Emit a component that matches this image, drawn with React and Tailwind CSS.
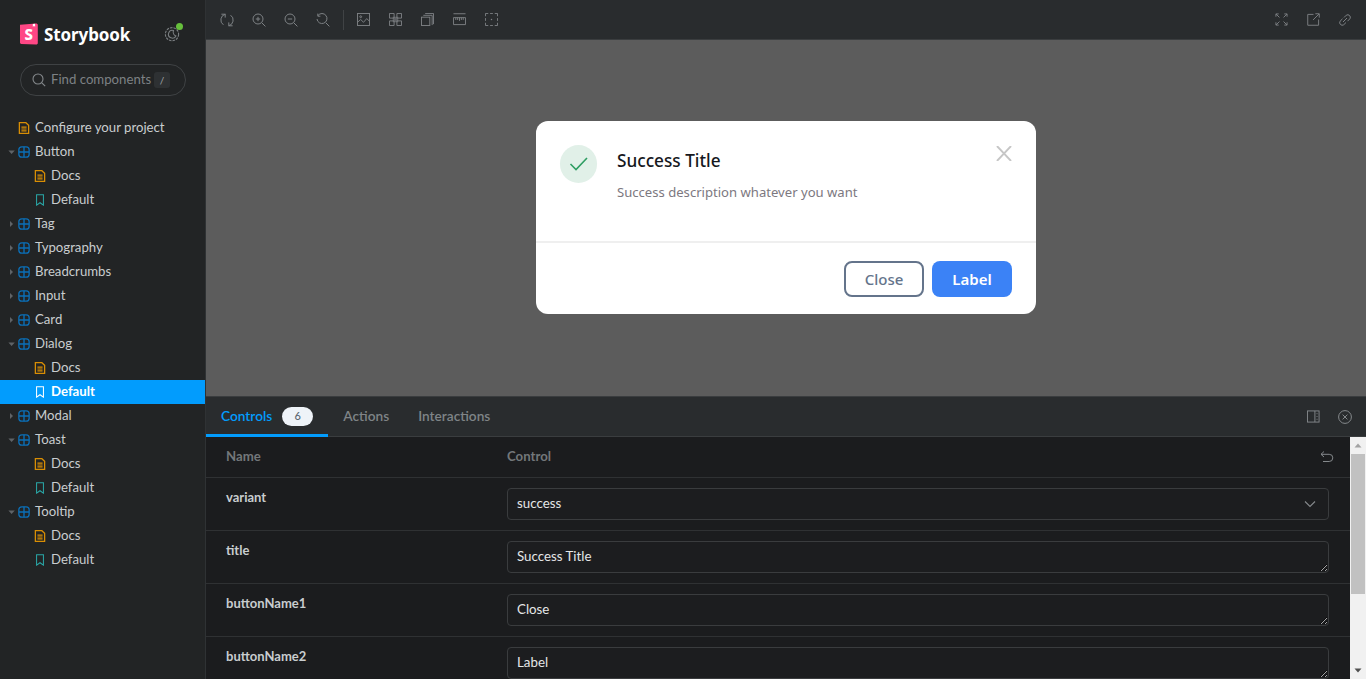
import React from "react";

const ui = { fontFamily: '"Noto Sans", "Open Sans", sans-serif' };
const chrome = { fontFamily: 'Lato, "Noto Sans", sans-serif' };

function Ic({ children, size = 14, className = "", sw = 1 }) {
  return (
    <svg width={size} height={size} viewBox="0 0 14 14" fill="none" stroke="currentColor" strokeWidth={sw} className={`shrink-0 ${className}`}>
      {children}
    </svg>
  );
}

const Doc = () => (
  <Ic size={12} className="text-[#d98e04]">
    <path d="M1.6.8h7.6l3.2 3v9.4H1.6z" strokeWidth="1.5" />
    <path d="M4 6h6M4 8.2h6M4 10.4h6" strokeWidth="1.3" />
  </Ic>
);
const Grid = () => (
  <Ic size={12} className="text-[#0b6fb8]">
    <rect x="1" y="1" width="12" height="12" rx="3.5" strokeWidth="1.5" />
    <path d="M1 7h12M7 1v12" strokeWidth="1.6" />
  </Ic>
);
const Mark = ({ c = "text-[#2aa7a7]" }) => (
  <Ic size={12} className={c}>
    <path d="M3 1h8v12L7 10.2 3 13z" strokeWidth="1.2" />
  </Ic>
);
const Caret = ({ open }) => (
  <svg width="8" height="8" viewBox="0 0 8 8" className="text-[#5f6367]" fill="currentColor">
    {open ? <path d="M.4 2.4h6.4L3.6 6z" /> : <path d="M2 1l3 3-3 3z" />}
  </svg>
);

function Row({ label, kind, open, active }) {
  const indent = kind === "doc" || kind === "story" ? "pl-[35px]" : kind === "top" ? "pl-[19px]" : "pl-[8px]";
  return (
    <div className={`h-6 flex items-center shrink-0 ${indent} text-[13.2px] ${active ? "bg-[#029cfd] text-white font-bold" : "text-[#c9cdcf]"}`}>
      {kind === "comp" && (
        <span className="w-[11px] flex justify-start">
          <Caret open={open} />
        </span>
      )}
      <span className="w-[16px] flex items-center -ml-px pr-0">
        {kind === "comp" && <Grid />}
        {(kind === "doc" || kind === "top") && <Doc />}
        {kind === "story" && <Mark c={active ? "text-white" : "text-[#2aa7a7]"} />}
      </span>
      <span className="ml-px">{label}</span>
    </div>
  );
}

const tree = [
  ["Configure your project", "top"],
  ["Button", "comp", true],
  ["Docs", "doc"],
  ["Default", "story"],
  ["Tag", "comp"],
  ["Typography", "comp"],
  ["Breadcrumbs", "comp"],
  ["Input", "comp"],
  ["Card", "comp"],
  ["Dialog", "comp", true],
  ["Docs", "doc"],
  ["Default", "story", false, true],
  ["Modal", "comp"],
  ["Toast", "comp", true],
  ["Docs", "doc"],
  ["Default", "story"],
  ["Tooltip", "comp", true],
  ["Docs", "doc"],
  ["Default", "story"],
];

function Sidebar() {
  return (
    <aside className="w-[206px] shrink-0 h-full bg-[#222425] border-r border-[#2f3234] flex flex-col">
      <div className="flex items-center h-[64px] pt-[4px] pl-5 pr-[25px] justify-between shrink-0">
        <div className="flex items-center gap-[6px]">
          <svg width="18" height="22" viewBox="0 0 18 22" className="shrink-0">
            <path d="M0 1.8 16 .6c1 0 1.8.5 1.8 1.5v18c0 1-.8 1.6-1.8 1.5L1.4 21C.5 21 0 20.4 0 19.6z" fill="#ff4785" />
            <path d="M12.8.9v2.9l1.2-.9 1.1.9V.7z" fill="#fff" />
            <text x="8.8" y="16.6" textAnchor="middle" fill="#fff" fontSize="15" fontWeight="800" fontFamily="Noto Sans">S</text>
          </svg>
          <span className="text-white text-[17px] font-bold tracking-[-0.1px] mt-[1px]">Storybook</span>
        </div>
        <div className="relative">
          <svg width="16" height="16" viewBox="0 0 16 16" fill="none" stroke="#7a7e81" strokeWidth="1.1">
            <circle cx="8" cy="8.2" r="6.6" strokeDasharray="2.6 1" />
            <path d="M9.5 4.5a3.9 3.9 0 1 0 2.4 5.4 4.2 4.2 0 0 1-2.4-5.4z" />
          </svg>
          <span className="absolute -top-[3px] -right-[3px] w-[7px] h-[7px] rounded-full bg-[#66bf3c]" />
        </div>
      </div>
      <div className="ml-5 mr-[19px] h-8 rounded-full border border-[#3f4244] flex items-center pl-[11px] pr-[15px] shrink-0" style={chrome}>
        <svg width="14" height="14" viewBox="0 0 14 14" fill="none" stroke="#85898c" strokeWidth="1.1" className="shrink-0">
          <circle cx="6" cy="6" r="5" />
          <path d="m9.8 9.8 3.4 3.4" />
        </svg>
        <span className="ml-[5px] text-[#7d8184] text-[13.2px] leading-[18px] mb-[2px] whitespace-nowrap">Find components</span>
        <span className="ml-[3px] w-4 h-4 shrink-0 rounded-[3px] bg-[#2e3133] text-[#a0a4a7] text-[10px] flex items-center justify-center">/</span>
      </div>
      <nav className="mt-[20px] flex flex-col" style={chrome}>
        {tree.map(([l, k, o, a], i) => (
          <Row key={i} label={l} kind={k} open={o} active={a} />
        ))}
      </nav>
    </aside>
  );
}

function Tool({ children }) {
  return <button className="w-8 h-8 flex items-center justify-center text-[#7e8285]">{children}</button>;
}

function Toolbar() {
  return (
    <header className="h-10 shrink-0 bg-[#292c2e] border-b border-[#3a3d3f] flex items-center justify-between pl-[5px] pr-[5px]">
      <div className="flex items-center">
        <Tool><Ic><path d="M5.4 1.2A5.9 5.9 0 0 0 3.4 11.8M8.6 12.8A5.9 5.9 0 0 0 10.6 2.2M1.4 1.2h3.8v3.4M12.6 12.8H8.8V9.4" sw="1.3" /></Ic></Tool>
        <Tool><Ic><circle cx="6" cy="6" r="5" /><path d="m9.8 9.8 3.6 3.6M3.8 6h4.4M6 3.8v4.4" /></Ic></Tool>
        <Tool><Ic><circle cx="6" cy="6" r="5" /><path d="m9.8 9.8 3.6 3.6M3.8 6h4.4" /></Ic></Tool>
        <Tool><Ic><path d="M2 2.5A5 5 0 1 1 1 6M1.8.6v2.6h2.6M9.8 9.8l3.6 3.6" /></Ic></Tool>
        <span className="w-px h-5 bg-[#404345] mx-[4px]" />
        <span className="-ml-px flex items-center">
          <Tool><Ic size={13}><rect x=".5" y=".5" width="13" height="13" /><path d="m.5 10 3.5-3 3 3 3.5-4 3 3" /><circle cx="4" cy="4" r="1" /></Ic></Tool>
          <Tool><Ic size={13}><path d="M.5.5h5v5h-5zM8.5.5h5v5h-5zM.5 8.5h5v5h-5zM8.5 8.5h5v5h-5z" /><rect x="4" y="4" width="6" height="6" fill="currentColor" stroke="none" opacity=".6" /></Ic></Tool>
          <Tool><Ic size={13}><rect x=".5" y="4.5" width="9" height="9" /><path d="M2.5 2.5h9.5V13M4.5.5h9V12" /></Ic></Tool>
          <Tool><Ic size={13}><path d="M.5.8h13M.5 5h13v7.5H.5z" /><path d="M3 5v2.5M5 5v2.5M7 5v3.5M9 5v2.5M11 5v2.5" /></Ic></Tool>
          <Tool><Ic size={13}><path d="M.5 3.5v-3h3M10.5.5h3v3M13.5 10.5v3h-3M3.5 13.5h-3v-3M.5 5.5v3M13.5 5.5v3M5.5.5h3M5.5 13.5h3" /><circle cx="7" cy="7" r=".8" fill="currentColor" stroke="none" /></Ic></Tool>
        </span>
      </div>
      <div className="flex items-center">
        <Tool><Ic size={13}><path d="M1 1l3.8 3.8M13 1 9.2 4.8M1 13l3.8-3.8M13 13 9.2 9.2M1 4V1h3M10 1h3v3M1 10v3h3M10 13h3v-3" sw="1.2" /></Ic></Tool>
        <Tool><Ic size={13}><path d="M7 1.5H.8v11.7h11.7V7M13 1 6.5 7.5M9 .8h4.2V5" /></Ic></Tool>
        <Tool><Ic size={14}><path d="M6 4.5 8.3 2.2a2.6 2.6 0 0 1 3.6 3.6L9.5 8.2M8 9.5l-2.3 2.3a2.6 2.6 0 0 1-3.6-3.6l2.4-2.4M5 9l4-4" sw="1.2" /></Ic></Tool>
      </div>
    </header>
  );
}

function Dialog() {
  return (
    <div className="w-[500px] h-[193px] bg-white rounded-xl flex flex-col">
      <div className="h-[122px] shrink-0 flex pl-6 pr-6 pt-6 border-b-2 border-[#efefef] relative">
        <div className="w-[37px] h-[38px] rounded-full bg-[#e1f0e8] flex items-center justify-center shrink-0">
          <svg width="20" height="16" viewBox="0 0 20 16" fill="none" stroke="#2f9e63" strokeWidth="1.6"><path d="m1.5 8 5.5 5.5L18 2" /></svg>
        </div>
        <div className="ml-[20px]">
          <h2 className="text-[17.2px] leading-[28px] font-medium text-[#16181d] mt-[2px]">Success Title</h2>
          <p className="text-[13.1px] leading-[20px] text-[#7c7880] mt-[7px]">Success description whatever you want</p>
        </div>
        <svg className="absolute top-[25px] right-[23px]" width="18" height="15" viewBox="0 0 18 16" fill="none" stroke="#c6c6c6" strokeWidth="2"><path d="m1.5 0 15 16M16.5 0l-15 16" /></svg>
      </div>
      <div className="flex-1 flex items-start pt-[18px] justify-end gap-2 pr-6">
        <button className="w-20 h-9 rounded-lg border-2 border-[#64748b] text-[#64748b] text-[15px] font-medium">Close</button>
        <button className="w-20 h-9 rounded-lg bg-[#3b82f6] text-white text-[15px] font-semibold">Label</button>
      </div>
    </div>
  );
}

function ControlRow({ name, children }) {
  return (
    <div className="h-[53px] shrink-0 border-b border-[#2f3133] flex pl-5 pr-[21px]">
      <div className="w-[281px] pt-[10px] text-[13px] font-bold text-[#c9cdcf]">{name}</div>
      <div className="flex-1 pt-[10px]">{children}</div>
    </div>
  );
}

function Area({ value }) {
  return (
    <textarea
      readOnly
      rows={1}
      value={value}
      className="block w-full h-8 bg-[#1c1d1f] border border-[#3a3c3e] rounded-[4px] px-[9px] py-[5px] text-[13.3px] leading-[18px] text-[#e4e6e7] resize-y outline-none overflow-hidden"
      style={chrome}
    />
  );
}

function Scrollbar() {
  return (
    <div className="w-[16px] shrink-0 bg-[#f1f1f1] flex flex-col items-center">
      <svg width="16" height="17" viewBox="0 0 16 17" className="shrink-0"><path d="M4.5 10.5 8 6.5l3.5 4z" fill="#a3a3a3" /></svg>
      <div className="w-[14px] h-[140px] bg-[#c1c1c1]" />
      <div className="flex-1" />
      <svg width="16" height="17" viewBox="0 0 16 17" className="shrink-0"><path d="M4.5 6.5 8 10.5l3.5-4z" fill="#505050" /></svg>
    </div>
  );
}

function Panel() {
  return (
    <section className="h-[283px] shrink-0 flex flex-col border-t border-[#3a3d3f]" style={chrome}>
      <div className="h-10 shrink-0 bg-[#292c2e] border-b border-[#3a3d3f] flex items-center justify-between pr-[14px]">
        <div className="flex h-full text-[13.7px] font-semibold">
          <div className="relative flex items-center pl-[15px] pr-[15px] text-[#029cfd]">
            Controls
            <span className="ml-[10px] w-[31px] h-[19px] rounded-full bg-[#eef3f8] text-[#5c6870] text-[11px] font-medium flex items-center justify-center">6</span>
            <span className="absolute left-0 right-0 bottom-[-1px] h-[3px] bg-[#029cfd]" />
          </div>
          <div className="flex items-center pl-[15px] pr-[14px] text-[#7f8487]">Actions</div>
          <div className="flex items-center px-[15px] text-[#7f8487]">Interactions</div>
        </div>
        <div className="flex items-center gap-[18px] text-[#85898c]">
          <Ic size={13}><rect x=".5" y="1" width="12.5" height="12" /><path d="M8.5 1v12" /><path d="M10.8 3.5v1M10.8 6.5v1M10.8 9.5v1" sw="1.2" /></Ic>
          <Ic size={14}><circle cx="7" cy="7" r="6.4" /><path d="m4.6 4.6 4.8 4.8M9.4 4.6l-4.8 4.8" /></Ic>
        </div>
      </div>
      <div className="flex-1 min-h-0 flex">
        <div className="flex-1 min-w-0 overflow-hidden bg-[#1b1c1e]">
          <div className="h-[41px] border-b border-[#2f3133] flex items-center pl-5 pr-[16px] text-[13.2px] font-bold text-[#73777a]">
            <div className="w-[281px]">Name</div>
            <div className="flex-1">Control</div>
            <Ic size={14} className="text-[#85898c]"><path d="M4 1.5 1 4.3 4 7M1 4.3h8.2a3.6 3.6 0 0 1 0 7.2H3" /></Ic>
          </div>
          <ControlRow name="variant">
            <div className="h-8 bg-[#1c1d1f] border border-[#3a3c3e] rounded-[4px] flex items-center justify-between pl-[9px] pr-[12px] text-[13.3px] text-[#e4e6e7]">
              success
              <svg width="12" height="8" viewBox="0 0 12 8" fill="none" stroke="#85898c" strokeWidth="1.1"><path d="m1 1.5 5 5 5-5" /></svg>
            </div>
          </ControlRow>
          <ControlRow name="title"><Area value="Success Title" /></ControlRow>
          <ControlRow name="buttonName1"><Area value="Close" /></ControlRow>
          <ControlRow name="buttonName2"><Area value="Label" /></ControlRow>
        </div>
        <Scrollbar />
      </div>
    </section>
  );
}

export default function App() {
  return (
    <div className="w-[1366px] h-[679px] flex overflow-hidden" style={ui}>
      <Sidebar />
      <main className="flex-1 min-w-0 flex flex-col">
        <Toolbar />
        <div className="flex-1 min-h-0 bg-[#5c5c5c] flex justify-center pt-[81px]">
          <Dialog />
        </div>
        <Panel />
      </main>
    </div>
  );
}
